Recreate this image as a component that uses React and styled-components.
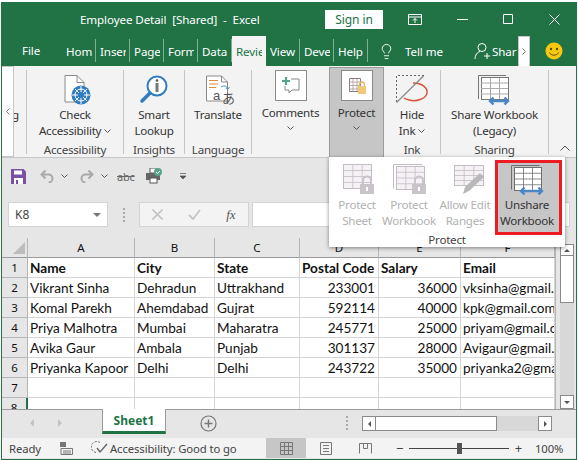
import React from "react";
import styled, { createGlobalStyle } from "styled-components";
import { Lightbulb } from "lucide-react";

const GREEN = "#217346";
const UI = `"Noto Sans", "Open Sans", sans-serif`;

const Global = createGlobalStyle`
  html, body { margin: 0; padding: 0; background: #fff; }
  body { font-family: ${UI}; }
`;

/* ---------- window ---------- */

const Page = styled.div`
  width: 578px;
  height: 460px;
  padding: 2px 1px 1px 1px;
  box-sizing: border-box;
  overflow: hidden;
`;

const Window = styled.div`
  position: relative;
  height: 457px;
  display: flex;
  flex-direction: column;
  border: 1px solid ${GREEN};
  border-top: 0;
  background: #e6e6e6;
`;

const TitleBar = styled.div`
  height: 34px;
  flex: none;
  background: ${GREEN};
  color: #fff;
  display: flex;
  align-items: center;
  font-size: 11.6px;
  letter-spacing: -0.1px;
`;

const Title = styled.div`
  margin-left: 78px;
  width: 245px;
  flex: none;
  white-space: pre;
`;

const SignIn = styled.div`
  width: 58px;
  height: 19px;
  flex: none;
  background: #fff;
  color: ${GREEN};
  display: flex;
  align-items: center;
  justify-content: center;
  font-size: 12px;
  margin-right: 25px;
`;

const WinButton = styled.div`
  width: ${p => p.$w}px;
  flex: none;
  display: flex;
  align-items: center;
`;

const TabBar = styled.div`
  height: 30px;
  flex: none;
  background: ${GREEN};
  color: #fff;
  display: flex;
  align-items: stretch;
  font-size: 11.6px;
  letter-spacing: -0.1px;
`;

const FileTab = styled.div`
  width: 60px;
  padding-left: 20px;
  box-sizing: border-box;
  line-height: 30px;
`;

const Tab = styled.div`
  width: 34px;
  box-sizing: border-box;
  padding-left: 4px;
  background: ${p => (p.$active ? "#f3f3f3" : "transparent")};
  color: ${p => (p.$active ? GREEN : "#fff")};
  display: flex;
  align-items: center;
  position: relative;
  &::after {
    content: "";
    display: ${p => (p.$active ? "none" : "block")};
    position: absolute;
    right: 0;
    top: 3px;
    bottom: 4px;
    width: 1px;
    background: #7fb197;
  }
`;

const TabText = styled.span`
  display: block;
  width: 26px;
  overflow: hidden;
  white-space: nowrap;
`;

const TellMe = styled.div`
  display: flex;
  align-items: center;
  margin-left: 10px;
  gap: 10px;
  width: 96px;
`;

const ShareTab = styled.div`
  display: flex;
  align-items: center;
  gap: 1px;
  width: 44px;
  overflow: hidden;
  white-space: nowrap;
`;

const TabScroll = styled.div`
  width: 12px;
  background: #fff;
  border: 1px solid #c6c6c6;
  border-bottom: 0;
  box-sizing: border-box;
  display: flex;
  align-items: center;
  justify-content: center;
`;

const Smiley = styled.div`
  margin-left: 15px;
  display: flex;
  align-items: center;
`;

/* ---------- ribbon ---------- */

const Ribbon = styled.div`
  height: 92px;
  flex: none;
  background: #f3f3f3;
  border-bottom: 1px solid #c6c6c6;
  box-sizing: border-box;
  display: flex;
  color: #333;
  font-size: 11.6px;
  letter-spacing: -0.23px;
  position: relative;
`;

const RibbonScroll = styled.div`
  width: 12px;
  background: #fff;
  border: 1px solid #c6c6c6;
  border-left: 0;
  box-sizing: border-box;
  display: flex;
  align-items: center;
  justify-content: center;
`;

const Clipped = styled.div`
  width: 13px;
  overflow: hidden;
  padding-top: 37px;
  border-right: 1px solid #c6c6c6;
  margin: 4px 0 3px 0;
  box-sizing: border-box;
  line-height: 16px;
  text-indent: -2px;
`;

const Group = styled.div`
  width: ${p => p.$w}px;
  box-sizing: border-box;
  margin: 4px 0 3px;
  border-right: ${p => (p.$noSep ? "0" : "1px solid #c6c6c6")};
  display: flex;
  flex-direction: column;
  align-items: center;
`;

const GroupBody = styled.div`
  flex: 1;
  min-height: 0;
  display: flex;
  flex-direction: column;
  align-items: center;
  padding-top: ${p => p.$top ?? 4}px;
  line-height: 16px;
  text-align: center;
  white-space: nowrap;
`;

const GroupName = styled.div`
  height: 12px;
  line-height: 16px;
  color: #444;
  text-align: center;
`;

const IconSlot = styled.div`
  height: ${p => p.$h ?? 32}px;
  display: flex;
  align-items: center;
  justify-content: center;
  margin-bottom: ${p => p.$mb ?? 1}px;
`;

const IconBox = styled.div`
  width: 30px;
  height: 29px;
  background: #fff;
  border: 1px solid #8a8a8a;
  display: flex;
  align-items: center;
  justify-content: center;
`;

const Caret = styled.svg.attrs({ viewBox: "0 0 7 4", width: 7, height: 4 })`
  fill: none;
  stroke: #555;
  stroke-width: 1;
  flex: none;
  vertical-align: 2px;
`;

const LoneCaret = styled.div`
  display: flex;
  margin-top: 5px;
`;

const ProtectButton = styled.div`
  width: 55px;
  background: #c6c6c6;
  border: 1px solid #9a9a9a;
  border-width: 1px 1px 0 1px;
  box-sizing: border-box;
  display: flex;
  flex-direction: column;
  align-items: center;
  padding-top: 2px;
  line-height: 16px;
  margin-top: 1px;
`;

const Collapse = styled.div`
  position: absolute;
  right: 6px;
  bottom: 3px;
`;

/* ---------- the open Protect menu ---------- */

const Menu = styled.div`
  position: absolute;
  left: 327px;
  top: 155px;
  width: 236px;
  height: 90px;
  background: #fff;
  box-shadow: 0 1px 4px rgba(0, 0, 0, 0.45);
  z-index: 5;
  display: flex;
  flex-direction: column;
  font-size: 11.6px;
  letter-spacing: -0.23px;
`;

const MenuItems = styled.div`
  display: flex;
  height: 75px;
  padding: 3px 0 0 2px;
  box-sizing: border-box;
`;

const MenuItem = styled.div`
  width: ${p => p.$w}px;
  box-sizing: border-box;
  display: flex;
  flex-direction: column;
  align-items: center;
  line-height: 16px;
  text-align: center;
  white-space: nowrap;
  color: ${p => (p.$off ? "#b1b1b1" : "#333")};
`;

const HotItem = styled(MenuItem)`
  background: #c6c6c6;
  outline: 3px solid #ed1c24;
  outline-offset: -1px;
  height: 71px;
  margin: 2px 0 0 2px;
  padding-right: 3px;
`;

const MenuIcon = styled.div`
  height: ${p => p.$h ?? 37}px;
  display: flex;
  align-items: center;
  justify-content: center;
`;

const MenuName = styled.div`
  text-align: center;
  line-height: 15px;
  color: #444;
`;

/* ---------- quick access + formula bar ---------- */

const Qat = styled.div`
  height: 36px;
  flex: none;
  display: flex;
  align-items: center;
  padding-left: 9px;
  box-sizing: border-box;
`;

const QatItem = styled.div`
  width: ${p => p.$w}px;
  display: flex;
  align-items: center;
`;

const AbcText = styled.span`
  font-size: 11px;
  color: #666;
  text-decoration: line-through;
  letter-spacing: -0.2px;
`;

const FormulaBar = styled.div`
  height: 44px;
  flex: none;
  display: flex;
  padding: 8px 0 11px 6px;
  box-sizing: border-box;
`;

const NameBox = styled.div`
  width: 100px;
  background: #fff;
  border: 1px solid #d4d4d4;
  box-sizing: border-box;
  display: flex;
  align-items: center;
  justify-content: space-between;
  padding: 0 6px;
  font-size: 12px;
  color: #444;
`;

const Dots = styled.div`
  width: ${p => p.$w}px;
  flex: none;
  display: flex;
  flex-direction: column;
  align-items: center;
  justify-content: center;
  gap: 2px;
  & > i { width: 2px; height: 2px; background: #aaa; display: block; }
`;

const FormulaButtons = styled.div`
  width: 110px;
  background: #f3f3f3;
  border: 1px solid #d4d4d4;
  box-sizing: border-box;
  display: flex;
  align-items: center;
  justify-content: space-around;
  margin-right: 3px;
`;

const Fx = styled.span`
  font-family: "Liberation Serif", serif;
  font-style: italic;
  font-size: 13px;
  color: #555;
`;

const FormulaInput = styled.div`
  width: 318px;
  background: #fff;
  border: 1px solid #d4d4d4;
  box-sizing: border-box;
`;

/* ---------- sheet ---------- */

const SheetArea = styled.div`
  height: 171px;
  flex: none;
  display: flex;
  background: #fff;
`;

const Sheet = styled.div`
  width: 553px;
  height: 171px;
  overflow: hidden;
  display: grid;
  grid-template-columns: 26px 107px 80px 85px 79px 82px 94px;
  grid-auto-rows: 20px;
  border-right: 1px solid #b5b5b5;
  font-family: Lato, sans-serif;
  font-size: 13.6px;
  color: #111;
`;

const Corner = styled.div`
  background: #e6e6e6;
  border-right: 1px solid #b5b5b5;
  border-bottom: 1px solid #9a9a9a;
  box-sizing: border-box;
  display: flex;
  align-items: flex-end;
  justify-content: flex-end;
  padding: 0 2px 3px 0;
`;

const ColHead = styled.div`
  background: #e6e6e6;
  border-right: 1px solid #b5b5b5;
  border-bottom: 1px solid #9a9a9a;
  box-sizing: border-box;
  display: flex;
  align-items: center;
  justify-content: center;
  font-family: ${UI};
  font-size: 11.5px;
`;

const RowHead = styled.div`
  background: #e6e6e6;
  border-right: ${p => (p.$sel ? `2px solid ${GREEN}` : "1px solid #b5b5b5")};
  border-bottom: 1px solid #b5b5b5;
  box-sizing: border-box;
  display: flex;
  align-items: center;
  justify-content: center;
  font-family: ${UI};
  font-size: 11.5px;
`;

const Cell = styled.div`
  border-right: 1px solid #d4d4d4;
  border-bottom: 1px solid #d4d4d4;
  box-sizing: border-box;
  padding: 0 3px 0 2px;
  overflow: hidden;
  white-space: nowrap;
  line-height: 20px;
  text-align: ${p => (p.$num ? "right" : "left")};
  font-weight: ${p => (p.$bold ? 700 : 400)};
`;

const VScroll = styled.div`
  flex: 1;
  background: #e6e6e6;
  display: flex;
  flex-direction: column;
  padding: 6px 0 0 4px;
`;

const ScrollArrow = styled.div`
  width: 14px;
  height: ${p => p.$h ?? 14}px;
  background: #fff;
  border: 1px solid #8a8a8a;
  box-sizing: border-box;
  display: flex;
  align-items: center;
  justify-content: center;
  flex: none;
`;

const VThumb = styled.div`
  width: 14px;
  height: 47px;
  background: #fff;
  border: 1px solid #8a8a8a;
  border-top: 0;
  box-sizing: border-box;
  flex: none;
`;

const VTrack = styled.div`
  width: 14px;
  flex: 1;
  background: #d8d8d8;
`;

const SheetTabs = styled.div`
  height: 29px;
  flex: none;
  display: flex;
  align-items: flex-start;
  border-top: 1px solid #9a9a9a;
  box-sizing: border-box;
`;

const NavArrows = styled.div`
  width: 100px;
  height: 26px;
  display: flex;
  align-items: center;
  padding-left: 28px;
  gap: 24px;
  box-sizing: border-box;
`;

const SheetTab = styled.div`
  width: 62px;
  height: 22px;
  background: #fff;
  border: 1px solid #9a9a9a;
  border-width: 0 1px;
  border-bottom: 3px solid ${GREEN};
  margin-top: -1px;
  display: flex;
  align-items: center;
  justify-content: center;
  color: ${GREEN};
  font-weight: 700;
  font-size: 12px;
`;

const AddSheet = styled.div`
  width: 179px;
  height: 26px;
  padding-left: 34px;
  box-sizing: border-box;
  display: flex;
  align-items: center;
`;

const TabDots = styled(Dots)`
  height: 26px;
`;

const HScroll = styled.div`
  display: flex;
  height: 15px;
  margin-top: 6px;
  margin-left: 13px;
`;

const HThumb = styled.div`
  width: 121px;
  height: 15px;
  background: #fff;
  border: 1px solid #8a8a8a;
  border-left: 0;
  box-sizing: border-box;
`;

const HTrack = styled.div`
  width: 41px;
  background: #d8d8d8;
`;

const Status = styled.div`
  height: 20px;
  flex: none;
  background: #f3f3f3;
  display: flex;
  align-items: center;
  font-size: 11.3px;
  color: #444;
  letter-spacing: -0.1px;
`;

const Ready = styled.div`
  width: 58px;
  padding-left: 7px;
  box-sizing: border-box;
`;

const AccessStatus = styled.div`
  display: flex;
  align-items: center;
  gap: 2px;
  margin-left: 18px;
  width: 175px;
  white-space: nowrap;
`;

const ViewButton = styled.div`
  width: ${p => p.$w}px;
  height: 20px;
  background: ${p => (p.$active ? "#c6c6c6" : "transparent")};
  display: flex;
  align-items: center;
  justify-content: center;
`;

const ZoomSlider = styled.div`
  display: flex;
  align-items: center;
  width: 126px;
  margin-left: 12px;
  gap: 6px;
`;

const ZoomSign = styled.span`
  font-size: 13px;
  color: #444;
  line-height: 1;
`;

const Track = styled.div`
  flex: 1;
  height: 1px;
  background: #444;
  position: relative;
`;

const Thumb = styled.div`
  position: absolute;
  left: 48px;
  top: -5px;
  width: 5px;
  height: 11px;
  background: #555;
`;

const ZoomValue = styled.div`
  margin-left: 13px;
`;

/* ---------- drawings ---------- */

// x0..x1, y0..y1 is the table; back adds the frame that lies behind it
const TableIcon = ({ x0, x1, y0, y1, back, stroke, fill, children }) => {
  const cw = (x1 - x0) / 3;
  const rh = (y1 - y0) / 4;
  const lines = [
    `M${x0 + cw} ${y0}V${y1}M${x0 + 2 * cw} ${y0}V${y1}`,
    `M${x0} ${y0 + rh}H${x1}M${x0} ${y0 + 2 * rh}H${x1}M${x0} ${y0 + 3 * rh}H${x1}`,
  ].join("");
  return (
    <svg width="40" height="32" viewBox="0 0 40 32" overflow="visible">
      {back && <path d={`M${x0 - 3} ${y1 - 1}V${y0 - 2}H${x1 - 2}`} fill="none" stroke={stroke} />}
      <rect x={x0} y={y0} width={x1 - x0} height={y1 - y0} fill={fill} stroke={stroke} />
      <path d={lines} stroke={stroke} fill="none" strokeWidth="0.8" />
      {children}
    </svg>
  );
};

const Lock = () => (
  <g>
    <path d="M26 21v-3.500a4 4 0 0 1 8 0V21" fill="none" stroke="#c9c4c9" strokeWidth="2" />
    <rect x="23" y="21" width="14" height="10" fill="#c9c4c9" />
    <rect x="29" y="24" width="2" height="4" fill="#fff" />
  </g>
);

const AccessIcon = () => (
  <svg width="30" height="30" viewBox="-4 0 30 30" overflow="visible">
    <path d="M1 .5h12l7 7V27H1z" fill="#fff" stroke="#8a8a8a" />
    <path d="M13 .5v7h7" fill="none" stroke="#8a8a8a" />
    <circle cx="17" cy="20" r="9.500" fill="#2f7cc0" />
    <circle cx="17" cy="20" r="6" fill="none" stroke="#fff" strokeWidth="1" />
    <path d="M17 11v18M8 20h18M11 14l12 12M23 14L11 26" stroke="#fff" strokeWidth="1" />
    <circle cx="17" cy="20" r="3" fill="#2f7cc0" />
  </svg>
);

const LookupIcon = () => (
  <svg width="30" height="30" viewBox="0 0 30 30">
    <circle cx="18" cy="11" r="9.500" fill="#fff" stroke="#2f7cc0" strokeWidth="2" />
    <path d="M11 18L3 26" stroke="#2f7cc0" strokeWidth="3.500" strokeLinecap="round" />
    <circle cx="18" cy="5.500" r="1.300" fill="#555" />
    <rect x="16.500" y="8" width="3" height="9" fill="#777" />
  </svg>
);

const TranslateIcon = () => (
  <svg width="30" height="30" viewBox="-3 0 30 30" overflow="visible">
    <path d="M.5 1h15l6 6v19H.5z" fill="#fff" stroke="#8a8a8a" />
    <path d="M15.500 1v6h6" fill="none" stroke="#8a8a8a" />
    <path d="M3 5.500h9M3 9h9M3 12.500h7" stroke="#e08a3c" strokeWidth="1.200" />
    <path d="M15 12c3-2 6-1 7 2l-2-1M22 14l1.500-2" fill="none" stroke="#4a86c5" />
    <text x="7" y="25" fontSize="13" fill="#555" fontFamily="Liberation Sans">a</text>
    <text x="16" y="28" fontSize="13" fill="#555" fontFamily="Noto Sans CJK JP">あ</text>
  </svg>
);

const CommentIcon = () => (
  <svg width="24" height="24" viewBox="0 0 24 24">
    <path d="M7 3v8M3 7h8" stroke="#53a28e" strokeWidth="2.200" />
    <path d="M12 5h8v11h-7l-3 3v-3H6v-4" fill="none" stroke="#888" />
  </svg>
);

const ProtectIcon = () => (
  <svg width="22" height="22" viewBox="0 0 22 22">
    <path d="M3.500 3.500h11v13h-11z" fill="#fff" stroke="#8a7a7a" />
    <path d="M3.500 7h11M3.500 10.500h11M3.500 14h11M7 4v12M11 4v12" stroke="#a89a9a" strokeWidth=".8" />
    <path d="M13.500 11V9.500a2.500 2.500 0 0 1 5 0V11" fill="none" stroke="#e3b766" strokeWidth="1.300" />
    <rect x="12" y="11" width="8" height="8" fill="#f0c777" />
  </svg>
);

const HideInkIcon = () => (
  <svg width="32" height="30" viewBox="0 0 32 30" overflow="visible">
    <path d="M.5 27V.5H28" fill="none" stroke="#666" strokeDasharray="2 2" />
    <path d="M17 8c9 0 15 5 14 10-1 6-11 9-18 7-2-.5-4-1-5-2" fill="none" stroke="#d8553a" strokeWidth="1.500" />
    <path d="M.5 27.500L27.500 1" stroke="#8a8a8a" strokeWidth="1.300" />
  </svg>
);

const ShareIcon = () => (
  <svg width="34" height="30" viewBox="0 0 34 30" overflow="visible">
    <path d="M1.500 24V.5H29" fill="none" stroke="#777" />
    <rect x="4.500" y="2.500" width="27" height="22" fill="#fff" stroke="#777" />
    <path d="M4 8h27M4 13.500h27M4 19h27M13.500 3v21M22.500 3v21" stroke="#aaa" />
    <path d="M13 26h18M16.500 22.500L13 26l3.500 3.500M27.500 22.500L31 26l-3.500 3.500" fill="none" stroke="#4a86c5" strokeWidth="2.400" />
  </svg>
);

const SmileyIcon = () => (
  <svg width="18" height="18" viewBox="0 0 18 18">
    <circle cx="9" cy="9" r="8.500" fill="#f9c80e" />
    <circle cx="6" cy="7" r="1.200" fill="#5b4a10" />
    <circle cx="12" cy="7" r="1.200" fill="#5b4a10" />
    <path d="M4.500 10.500c1 3.500 8 3.500 9 0" fill="none" stroke="#5b4a10" />
  </svg>
);

const PersonIcon = () => (
  <svg width="17" height="18" viewBox="0 0 17 18" fill="none" stroke="#fff" style={{ flex: "none" }}>
    <circle cx="8" cy="5.500" r="4" />
    <path d="M1 17c0-4 2.500-7 5-7.500M10 14h6M13 11v6" />
  </svg>
);

const Save = () => (
  <svg width="15" height="15" viewBox="0 0 15 15">
    <path d="M0 0h12.500L15 2.500V15H0z" fill="#7b4fa6" />
    <rect x="3" y="1.500" width="8" height="4" fill="#fff" />
    <rect x="3" y="9" width="9" height="6" fill="#fff" />
    <rect x="5" y="11" width="2" height="4" fill="#7b4fa6" />
  </svg>
);

const Undo = ({ flip }) => (
  <svg width="15" height="14" viewBox="0 0 15 14" style={flip ? { transform: "scaleX(-1)" } : undefined}>
    <path d="M1.500 5.500h7a4 4 0 0 1 0 8M5.500 1.500l-4 4 4 4" fill="none" stroke="#aaa" strokeWidth="2" />
  </svg>
);

const SpellPrint = () => (
  <svg width="17" height="16" viewBox="0 0 17 16">
    <rect x="4" y="0" width="7" height="5" fill="#fff" stroke="#555" />
    <rect x="0" y="5" width="14" height="7" fill="#666" />
    <rect x="4" y="10" width="7" height="5" fill="#fff" stroke="#555" />
    <circle cx="12" cy="4" r="4" fill="#5aa58a" />
    <path d="M10 4l1.500 1.500L14 3" fill="none" stroke="#fff" />
  </svg>
);

const Tri = ({ dir = "down", color = "#666", s = 4 }) => {
  const d = {
    down: `M0 0h${s * 2}L${s} ${s}z`,
    up: `M0 ${s}h${s * 2}L${s} 0z`,
    left: `M${s} 0v${s * 2}L0 ${s}z`,
    right: `M0 0v${s * 2}L${s} ${s}z`,
  }[dir];
  const v = dir === "left" || dir === "right";
  return (
    <svg width={v ? s : s * 2} height={v ? s * 2 : s}>
      <path d={d} fill={color} />
    </svg>
  );
};

const Chevron = () => (
  <Caret>
    <path d="M.5 .5L3.500 3.500L6.500 .5" />
  </Caret>
);

/* ---------- data ---------- */

const tabs = ["Hom", "Inser", "Page", "Form", "Data", "Revie", "View", "Deve", "Help"];
const columns = ["A", "B", "C", "D", "E", "F"];
const rows = [
  ["Name", "City", "State", "Postal Code", "Salary", "Email"],
  ["Vikrant Sinha", "Dehradun", "Uttrakhand", 233001, 36000, "vksinha@gmail.com"],
  ["Komal Parekh", "Ahemdabad", "Gujrat", 592114, 40000, "kpk@gmail.com"],
  ["Priya Malhotra", "Mumbai", "Maharatra", 245771, 25000, "priyam@gmail.com"],
  ["Avika Gaur", "Ambala", "Punjab", 301137, 28000, "Avigaur@gmail.com"],
  ["Priyanka Kapoor", "Delhi", "Delhi", 243722, 35000, "priyanka2@gmail.com"],
  ["", "", "", "", "", ""],
  ["", "", "", "", "", ""],
];

const OFF = { stroke: "#c4bcc4", fill: "#f5f2f5" };

export default function App() {
  return (
    <Page>
      <Global />
      <Window>
        <TitleBar>
          <Title>Employee Detail  [Shared]  -  Excel</Title>
          <SignIn>Sign in</SignIn>
          <WinButton $w={49}>
            <svg width="14" height="11" viewBox="0 0 14 11" fill="none" stroke="#fff">
              <path d="M.5.500h13v10H.5zM.5 3h13M7 9V4.500M5 6.500l2-2 2 2" />
            </svg>
          </WinButton>
          <WinButton $w={46}>
            <svg width="11" height="1"><path d="M0 .5h11" stroke="#fff" /></svg>
          </WinButton>
          <WinButton $w={46}>
            <svg width="10" height="10"><path d="M.5.500h9v9h-9z" fill="none" stroke="#fff" /></svg>
          </WinButton>
          <WinButton $w={20}>
            <svg width="11" height="11"><path d="M.5.500l10 10M10.500.500l-10 10" stroke="#fff" /></svg>
          </WinButton>
        </TitleBar>

        <TabBar>
          <FileTab>File</FileTab>
          {tabs.map(t => (
            <Tab key={t} $active={t === "Revie"}>
              <TabText>{t}</TabText>
            </Tab>
          ))}
          <TellMe>
            <Lightbulb size={17} color="#fff" strokeWidth={1.3} />
            <span>Tell me</span>
          </TellMe>
          <ShareTab>
            <PersonIcon />
            <span>Shar</span>
          </ShareTab>
          <TabScroll>
            <svg width="4" height="7" fill="none" stroke="#777"><path d="M.5.500l3 3-3 3" /></svg>
          </TabScroll>
          <Smiley><SmileyIcon /></Smiley>
        </TabBar>

        <Ribbon>
          <RibbonScroll>
            <svg width="4" height="7" fill="none" stroke="#777"><path d="M3.500.500l-3 3 3 3" /></svg>
          </RibbonScroll>
          <Clipped>g</Clipped>
          <Group $w={97}>
            <GroupBody>
              <IconSlot><AccessIcon /></IconSlot>
              <div>Check</div>
              <div>Accessibility <Chevron /></div>
            </GroupBody>
            <GroupName>Accessibility</GroupName>
          </Group>
          <Group $w={61}>
            <GroupBody>
              <IconSlot><LookupIcon /></IconSlot>
              <div>Smart</div>
              <div>Lookup</div>
            </GroupBody>
            <GroupName>Insights</GroupName>
          </Group>
          <Group $w={67}>
            <GroupBody>
              <IconSlot><TranslateIcon /></IconSlot>
              <div>Translate</div>
            </GroupBody>
            <GroupName>Language</GroupName>
          </Group>
          <Group $w={77} $noSep>
            <GroupBody $top={0}>
              <IconSlot $h={31} $mb={4}>
                <IconBox><CommentIcon /></IconBox>
              </IconSlot>
              <div>Comments</div>
              <LoneCaret><Chevron /></LoneCaret>
            </GroupBody>
          </Group>
          <ProtectButton>
            <IconSlot $h={31} $mb={4}>
              <IconBox><ProtectIcon /></IconBox>
            </IconSlot>
            <div>Protect</div>
            <LoneCaret><Chevron /></LoneCaret>
          </ProtectButton>
          <Group $w={57}>
            <GroupBody>
              <IconSlot><HideInkIcon /></IconSlot>
              <div>Hide</div>
              <div>Ink <Chevron /></div>
            </GroupBody>
            <GroupName>Ink</GroupName>
          </Group>
          <Group $w={108}>
            <GroupBody>
              <IconSlot><ShareIcon /></IconSlot>
              <div>Share Workbook</div>
              <div>(Legacy)</div>
            </GroupBody>
            <GroupName>Sharing</GroupName>
          </Group>
          <Collapse>
            <svg width="10" height="6" fill="none" stroke="#555"><path d="M.5 5.500l4.500-4.500 4.500 4.500" /></svg>
          </Collapse>
        </Ribbon>

        <Menu>
          <MenuItems>
            <MenuItem $w={52} $off>
              <MenuIcon>
                <TableIcon x0={6.5} x1={34.5} y0={1.5} y1={25.5} {...OFF}><Lock /></TableIcon>
              </MenuIcon>
              <div>Protect</div>
              <div>Sheet</div>
            </MenuItem>
            <MenuItem $w={52} $off>
              <MenuIcon>
                <TableIcon x0={7.5} x1={35.5} y0={3.5} y1={26.5} back {...OFF}><Lock /></TableIcon>
              </MenuIcon>
              <div>Protect</div>
              <div>Workbook</div>
            </MenuItem>
            <MenuItem $w={60} $off>
              <MenuIcon>
                <TableIcon x0={9.5} x1={38.5} y0={2.5} y1={22.5} {...OFF}>
                  <path d="M18 31l2-7 15-14 4 4-15 14z" fill="#b9b9b9" />
                </TableIcon>
              </MenuIcon>
              <div>Allow Edit</div>
              <div>Ranges</div>
            </MenuItem>
            <HotItem $w={63}>
              <MenuIcon $h={35}>
                <TableIcon x0={7.5} x1={34.5} y0={3.5} y1={26.5} back stroke="#6f6f6f" fill="#fff">
                  <path d="M14 27h21M17.500 23.500L14 27l3.500 3.500M31.500 23.500L35 27l-3.500 3.500" fill="none" stroke="#4a86c5" strokeWidth="2.400" />
                </TableIcon>
              </MenuIcon>
              <div>Unshare</div>
              <div>Workbook</div>
            </HotItem>
          </MenuItems>
          <MenuName>Protect</MenuName>
        </Menu>

        <Qat>
          <QatItem $w={29}><Save /></QatItem>
          <QatItem $w={21}><Undo /></QatItem>
          <QatItem $w={18}><Chevron /></QatItem>
          <QatItem $w={22}><Undo flip /></QatItem>
          <QatItem $w={16}><Chevron /></QatItem>
          <QatItem $w={29}><AbcText>abc</AbcText></QatItem>
          <QatItem $w={34}><SpellPrint /></QatItem>
          <QatItem $w={10}>
            <svg width="6" height="6"><path d="M0 .5h6M0 3h6L3 6z" stroke="#555" fill="#555" strokeWidth=".7" /></svg>
          </QatItem>
        </Qat>

        <FormulaBar>
          <NameBox>
            <span>K8</span>
            <Tri color="#777" />
          </NameBox>
          <Dots $w={31}><i /><i /><i /><i /></Dots>
          <FormulaButtons>
            <svg width="11" height="11"><path d="M.5.500l10 10M10.500.500l-10 10" stroke="#c4c4c4" strokeWidth="1.600" /></svg>
            <svg width="13" height="11"><path d="M1 6l4 4 7-9" fill="none" stroke="#c4c4c4" strokeWidth="1.800" /></svg>
            <Fx>fx</Fx>
          </FormulaButtons>
          <FormulaInput />
        </FormulaBar>

        <SheetArea>
          <Sheet>
            <Corner>
              <svg width="12" height="12"><path d="M12 0v12H0z" fill="#bcbcbc" /></svg>
            </Corner>
            {columns.map(c => <ColHead key={c}>{c}</ColHead>)}
            {rows.map((row, i) => (
              <React.Fragment key={i}>
                <RowHead $sel={i === 7}>{i + 1}</RowHead>
                {row.map((v, j) => (
                  <Cell key={j} $num={typeof v === "number"} $bold={i === 0}>{v}</Cell>
                ))}
              </React.Fragment>
            ))}
          </Sheet>
          <VScroll>
            <ScrollArrow $h={12}><Tri dir="up" s={3} color="#555" /></ScrollArrow>
            <VThumb />
            <VTrack />
            <ScrollArrow><Tri s={3} color="#555" /></ScrollArrow>
          </VScroll>
        </SheetArea>

        <SheetTabs>
          <NavArrows>
            <Tri dir="left" color="#c4c4c4" />
            <Tri dir="right" color="#c4c4c4" />
          </NavArrows>
          <SheetTab>Sheet1</SheetTab>
          <AddSheet>
            <svg width="17" height="17" viewBox="0 0 17 17" fill="none" stroke="#777">
              <circle cx="8.500" cy="8.500" r="7.500" strokeWidth="1.200" />
              <path d="M8.500 4.500v8M4.500 8.500h8" strokeWidth="1.500" />
            </svg>
          </AddSheet>
          <TabDots $w={4}><i /><i /><i /><i /></TabDots>
          <HScroll>
            <ScrollArrow $h={15}><Tri dir="left" s={3} color="#555" /></ScrollArrow>
            <HThumb />
            <HTrack />
            <ScrollArrow $h={15}><Tri dir="right" s={3} color="#555" /></ScrollArrow>
          </HScroll>
        </SheetTabs>

        <Status>
          <Ready>Ready</Ready>
          <svg width="13" height="13" viewBox="0 0 13 13">
            <rect x="0" y="0" width="6" height="5" fill="#777" />
            <path d="M1 6.500h11.500v6H1zM3 9h8M3 11h8" fill="none" stroke="#777" />
          </svg>
          <AccessStatus>
            <svg width="17" height="14" viewBox="0 0 17 14" fill="none" stroke="#666">
              <path d="M9 1.500a5.500 5.500 0 1 0 -3 10" strokeDasharray="2 1.500" />
              <path d="M6 7l3 4 7-8" strokeWidth="1.400" />
            </svg>
            <span>Accessibility: Good to go</span>
          </AccessStatus>
          <ViewButton $w={40} $active>
            <svg width="13" height="13"><path d="M.5.500h12v12H.5zM.5 4.500h12M.5 8.500h12M4.500.500v12M8.500.500v12" fill="none" stroke="#777" /></svg>
          </ViewButton>
          <ViewButton $w={40}>
            <svg width="12" height="13"><path d="M.5.500h11v12H.5zM3 3.500h6M3 6.500h6M3 9.500h6" fill="none" stroke="#777" /></svg>
          </ViewButton>
          <ViewButton $w={38}>
            <svg width="13" height="11"><path d="M.5 10.500V.5h12v10M4.500.500v5h4v-5" fill="none" stroke="#777" /></svg>
          </ViewButton>
          <ZoomSlider>
            <ZoomSign>−</ZoomSign>
            <Track><Thumb /></Track>
            <ZoomSign>+</ZoomSign>
          </ZoomSlider>
          <ZoomValue>100%</ZoomValue>
        </Status>
      </Window>
    </Page>
  );
}
